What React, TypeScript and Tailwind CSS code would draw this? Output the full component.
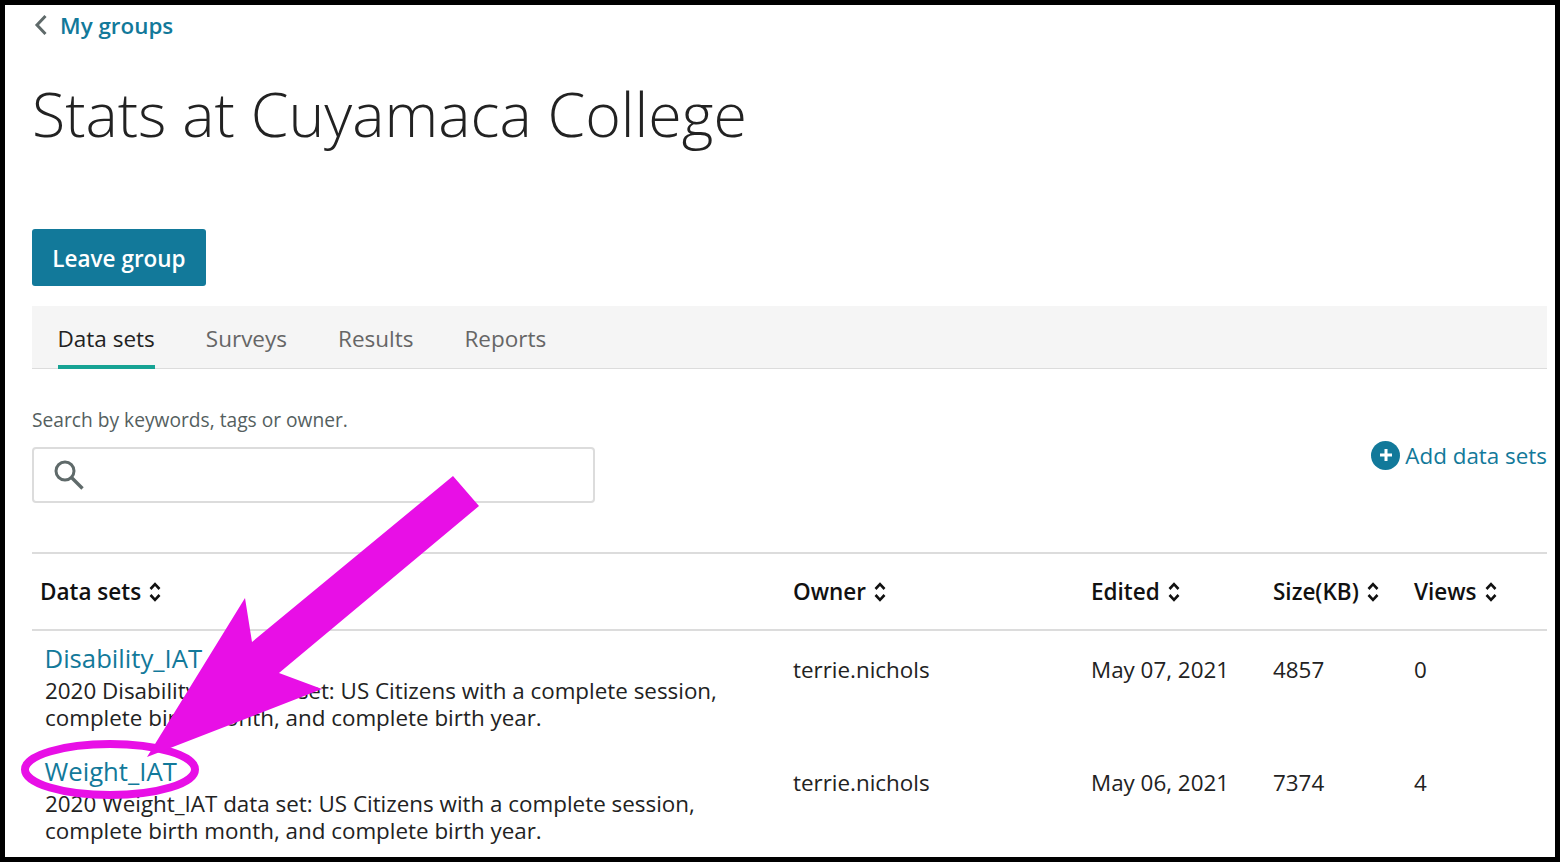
const font = { fontFamily: '"Open Sans", sans-serif' };

function SortIcon() {
  return (
    <svg viewBox="0 0 14 22" className="ml-[7px] w-[14px] h-[22px] text-[#111]">
      <path d="M2.5 8 7 3.2 11.5 8M2.5 14 7 18.8 11.5 14" fill="none" stroke="currentColor" strokeWidth="2.6" />
    </svg>
  );
}

const columns = 'grid grid-cols-[753px_298px_182px_141px_1fr]';

const rows = [
  {
    name: 'Disability_IAT',
    line1: '2020 Disability_IAT data set: US Citizens with a complete session,',
    line2: 'complete birth month, and complete birth year.',
    owner: 'terrie.nichols',
    edited: 'May 07, 2021',
    size: '4857',
    views: '0',
  },
  {
    name: 'Weight_IAT',
    line1: '2020 Weight_IAT data set: US Citizens with a complete session,',
    line2: 'complete birth month, and complete birth year.',
    owner: 'terrie.nichols',
    edited: 'May 06, 2021',
    size: '7374',
    views: '4',
  },
];

export default function App() {
  return (
    <div className="relative w-[1560px] h-[862px] overflow-hidden bg-white border-[5px] border-black" style={font}>
      <div className="pl-[27px] pr-[8px]">
        {/* Back link */}
        <div className="flex items-center h-[42px]">
          <svg viewBox="0 0 14 22" className="ml-[2px] -mt-[2px] w-[14px] h-[22px] text-[#5f6a6a]">
            <path d="M11.5 2 3 11l8.5 9" fill="none" stroke="currentColor" strokeWidth="3" />
          </svg>
          <a className="ml-[12px] text-[22.4px] font-semibold text-[#12799a]">My groups</a>
        </div>

        <h1 className="mt-[24px] h-[100px] text-[60.85px] leading-[86px] font-light text-[#222]">Stats at Cuyamaca College</h1>

        <button className="block mt-[58px] w-[174px] h-[57px] pt-[2px] bg-[#12799a] rounded-[3px] text-[22.5px] font-semibold text-white">
          Leave group
        </button>

        {/* Tabs */}
        <div className="flex mt-[20px] h-[63px] pl-[25.5px] gap-[51px] bg-[#f5f5f5] border-b border-[#dcdcdc]">
          <div className="h-[63px] border-b-[4px] border-[#16a394] text-[22.5px] leading-[66px] text-[#222]">Data sets</div>
          <div className="text-[22.5px] leading-[66px] text-[#666]">Surveys</div>
          <div className="text-[22.5px] leading-[66px] text-[#666]">Results</div>
          <div className="text-[22.5px] leading-[66px] text-[#666]">Reports</div>
        </div>

        {/* Search */}
        <div className="flex justify-between mt-[36px] h-[98px]">
          <div>
            <div className="text-[19.2px] leading-[30px] text-[#555f5f]">Search by keywords, tags or owner.</div>
            <div className="flex items-center mt-[12px] w-[563px] h-[56px] px-[20px] border-2 border-[#dcdcdc] rounded-[4px]">
              <svg viewBox="0 0 30 30" className="size-[30px] text-[#5f6a6a]">
                <circle cx="11" cy="11" r="9" fill="none" stroke="currentColor" strokeWidth="3" />
                <path d="M17.5 17.5 28.5 28.5" fill="none" stroke="currentColor" strokeWidth="3.4" />
              </svg>
            </div>
          </div>
          <div className="flex items-center h-[40px] mt-[30px] text-[22.4px] text-[#12799a]">
            <span className="flex items-center justify-center size-[29px] mr-[5px] rounded-full bg-[#12799a] text-white">
              <svg viewBox="0 0 16 16" className="size-[16px]">
                <path d="M8 2v12M2 8h12" stroke="currentColor" strokeWidth="3" />
              </svg>
            </span>
            <span className="pt-[2px]">Add data sets</span>
          </div>
        </div>

        {/* Table header */}
        <div className={`${columns} mt-[49px] h-[79px] pl-[8px] items-center border-t-2 border-b-2 border-[#dcdcdc] text-[22.5px] font-semibold text-[#111]`}>
          <div className="flex items-center">Data sets<SortIcon /></div>
          <div className="flex items-center">Owner<SortIcon /></div>
          <div className="flex items-center">Edited<SortIcon /></div>
          <div className="flex items-center">Size(KB)<SortIcon /></div>
          <div className="flex items-center">Views<SortIcon /></div>
        </div>

        {/* Table rows */}
        {rows.map((row) => (
          <div key={row.name} className={`${columns} pl-[8px] h-[113px] pt-[12px] text-[22.4px] text-[#222]`}>
            <div className="pl-[5px]">
              <div className="-mt-[1px] -ml-[0.5px] text-[25.7px] leading-[33px] text-[#12799a]">{row.name}</div>
              <div className="mt-[2px] leading-[27px] whitespace-nowrap">{row.line1}</div>
              <div className="leading-[27px] whitespace-nowrap">{row.line2}</div>
            </div>
            <div className="leading-[53px]">{row.owner}</div>
            <div className="leading-[53px]">{row.edited}</div>
            <div className="leading-[53px]">{row.size}</div>
            <div className="leading-[53px]">{row.views}</div>
          </div>
        ))}
      </div>

      {/* Magenta annotation over the page */}
      <svg className="absolute -left-[5px] -top-[5px]" width="1560" height="862" viewBox="0 0 1560 862">
        <ellipse cx="110" cy="769.5" rx="85" ry="25.5" fill="none" stroke="#e80fe6" strokeWidth="8" />
        <polygon points="147,757 245,598 252,642 453,476 479,506 279,673 322,689" fill="#e80fe6" />
      </svg>
    </div>
  );
}
